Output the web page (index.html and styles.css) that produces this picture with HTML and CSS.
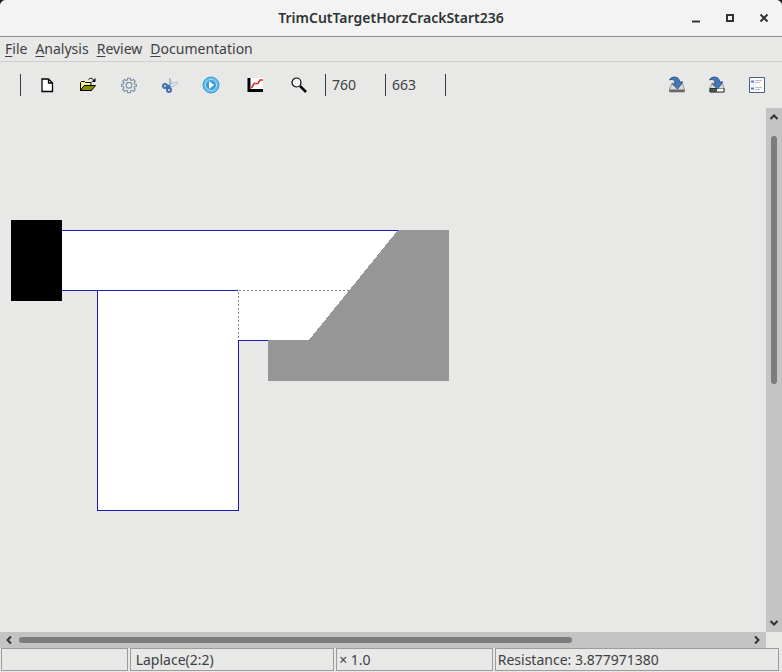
FILE: index.html
```html
<!DOCTYPE html>
<html lang="en">
<head>
<meta charset="utf-8">
<title>TrimCutTargetHorzCrackStart236</title>
<link rel="stylesheet" href="styles.css">
</head>
<body>
<div class="window">
  <header class="titlebar">
    <h1 class="title">TrimCutTargetHorzCrackStart236</h1>
    <div class="controls">
      <button type="button" aria-label="Minimize"><svg width="10" height="10" viewBox="0 0 10 10"><path d="M1 8.5h8" stroke="#2e3436" stroke-width="2"/></svg></button>
      <button type="button" aria-label="Maximize"><svg width="10" height="10" viewBox="0 0 10 10"><path d="M2 2h6v6H2z" fill="none" stroke="#2e3436" stroke-width="2"/></svg></button>
      <button type="button" aria-label="Close"><svg width="10" height="10" viewBox="0 0 10 10"><path d="M1.500 1.500l7 7M8.500 1.500l-7 7" stroke="#2e3436" stroke-width="2"/></svg></button>
    </div>
  </header>

  <nav class="menubar">
    <button type="button"><u>F</u>ile</button>
    <button type="button"><u>A</u>nalysis</button>
    <button type="button"><u>R</u>eview</button>
    <button type="button"><u>D</u>ocumentation</button>
  </nav>

  <div class="toolbar" role="toolbar">
    <span class="sep"></span>
    <div class="tools">
      <button type="button" aria-label="New"><svg width="18" height="18" viewBox="0 0 18 18"><path d="M4 3h6.500l4 4v8.500H4z" fill="#fff" stroke="#000" stroke-width="1.300"/><path d="M10.500 3v4h4" fill="none" stroke="#000" stroke-width="1.300"/></svg></button>
      <button type="button" aria-label="Open"><svg width="18" height="16" viewBox="0 0 18 16"><path d="M1.500 13.500v-8l1-1h3l1 1h5.500v3" fill="#f8f58a" stroke="#000"/><path d="M1.500 13.500l3.500-5h11.500l-4 5z" fill="#8c8c00" stroke="#000"/><path d="M9.500 2.500c1.500-2 4-1.500 5.500 1" fill="none" stroke="#000"/><path d="M16.500 1v4h-4z" fill="#000"/></svg></button>
      <button type="button" aria-label="Settings"><svg width="18" height="18" viewBox="0 0 20 20" fill="none" stroke="#7893a8" stroke-width="1.300"><path d="M8.500 2.500h3l.4 2.100 1.100.5 1.900-1.300 2 2-1.300 1.900.5 1.200 2.100.4v2.200l-2.100.5-.5 1.200 1.300 1.900-2 2-1.900-1.200-1.100.5-.4 2.100h-3l-.4-2.100-1.100-.5-1.900 1.200-2-2 1.300-1.900-.5-1.200-2.100-.5V9.300l2.100-.4.5-1.200-1.300-1.900 2-2L7 5.100l1.100-.5z"/><circle cx="10" cy="10.300" r="3.200"/></svg></button>
      <button type="button" aria-label="Cut"><svg width="18" height="18" viewBox="0 0 18 18"><path d="M8.500 2l1.500 3 .5 5-2 1.500z" fill="#bcc7d0" stroke="#8ba3b5" stroke-width=".6"/><path d="M17 6l-4 .5-7 3.500 5 .8c2-.2 5-2.800 6-4.800z" fill="#dce2e7" stroke="#9dacb8" stroke-width=".6"/><g fill="none" stroke="#3f6faa" stroke-width="2"><circle cx="4" cy="10" r="2"/><circle cx="8" cy="14" r="2"/><path d="M6 10.500l3-1M8.500 12v-2.500"/></g></svg></button>
      <button type="button" aria-label="Run"><svg width="18" height="18" viewBox="0 0 18 18"><circle cx="9" cy="9" r="8" fill="#62bdec" stroke="#3b9bd2"/><circle cx="9" cy="9" r="5.500" fill="#3f9bd8" stroke="#a4def8"/><path d="M7 5l5 4-5 4z" fill="#fff"/></svg></button>
      <button type="button" class="group" aria-label="Plot"><svg width="16" height="16" viewBox="0 0 16 16"><path d="M1 1h15v14H1z" fill="#fff"/><path d="M2 1v12.500h14" fill="none" stroke="#000" stroke-width="3"/><path d="M4.500 11l2.500-4.500h4l2-3.500h3" fill="none" stroke="#e52a35" stroke-width="1.600"/></svg></button>
      <button type="button" class="group" aria-label="Zoom"><svg width="16" height="16" viewBox="0 0 16 16"><circle cx="5.500" cy="5.500" r="4.500" fill="#f4f4f3" stroke="#000" stroke-width="1.200"/><path d="M9 9l6 6" stroke="#000" stroke-width="2.500"/></svg></button>
    </div>
    <span class="sep"></span>
    <output class="coord" aria-label="X">760</output>
    <span class="sep"></span>
    <output class="coord" aria-label="Y">663</output>
    <span class="sep"></span>
    <div class="saves">
      <button type="button" aria-label="Save"><svg width="18" height="18" viewBox="0 0 18 18"><path d="M4 7h10l2.500 6v3h-15v-3z" fill="#dadbd8" stroke="#8a8c88" stroke-width=".8"/><path d="M1.500 13.500h15V16h-15z" fill="#666b68"/><path d="M1.500 4C3 0 10 0 11.500 4.500l.3 1.500h3L9.500 13 4.500 8h2.700C7.500 4.500 4.500 2.500 1.500 4z" fill="#4679b7" stroke="#204a87" stroke-width=".9"/></svg></button>
      <button type="button" aria-label="Save as"><svg width="18" height="18" viewBox="0 0 18 18"><path d="M4 7h10l2.500 6v3h-15v-3z" fill="#dadbd8" stroke="#8a8c88" stroke-width=".8"/><path d="M2 12.500h14V16H2z" fill="#50564d" stroke="#2e3436"/><path d="M9 12.500h6.500v3H9z" fill="#f5f5f0"/><path d="M1.500 4C3 0 10 0 11.500 4.500l.3 1.500h3L9.500 13 4.500 8h2.700C7.500 4.500 4.500 2.500 1.500 4z" fill="#4679b7" stroke="#204a87" stroke-width=".9"/></svg></button>
      <button type="button" aria-label="Properties"><svg width="18" height="18" viewBox="0 0 18 18"><path d="M1.500 1.500h15v15h-15z" fill="#fcfcfc" stroke="#4b6080"/><path d="M3 5.500h3M3 12.500h3" stroke="#4a7ad0" stroke-width="2"/><path d="M7 4.500h7M7 6.500h5M7 11.500h7M7 13.500h5" stroke="#b9bec7"/></svg></button>
    </div>
  </div>

  <main class="view">
    <svg class="drawing" width="766" height="523" role="img" aria-label="Resistor geometry" shape-rendering="crispEdges">
      <path d="M62 122h336L309 232h-71v171H98V183H62z" fill="#fff"/>
      <path d="M398 122h51v151H268v-41h41z" fill="#969696"/>
      <g fill="none" stroke="#1c1cc4"><path d="M62 122.500h336M62 182.500h176M97.500 182v221M97 402.500h142M238.500 403V232M238 232.500h30"/></g>
      <path d="M239 182.500h110M238.500 184v48" fill="none" stroke="#858585" stroke-dasharray="2 2"/>
      <path d="M11 112h51v81H11z"/>
    </svg>
    <div class="vbar">
      <button type="button" aria-label="Scroll up"><svg width="10" height="8" viewBox="0 0 10 8"><path d="M1.500 6L5 2.500 8.500 6"/></svg></button>
      <div class="track"><div class="thumb"></div></div>
      <button type="button" aria-label="Scroll down"><svg width="10" height="8" viewBox="0 0 10 8"><path d="M1.500 2L5 5.500 8.500 2"/></svg></button>
    </div>
    <div class="hbar">
      <button type="button" aria-label="Scroll left"><svg width="8" height="10" viewBox="0 0 8 10"><path d="M6 1.500L2.500 5 6 8.500"/></svg></button>
      <div class="track"><div class="thumb"></div></div>
      <button type="button" aria-label="Scroll right"><svg width="8" height="10" viewBox="0 0 8 10"><path d="M2 1.500L5.500 5 2 8.500"/></svg></button>
    </div>
  </main>

  <footer class="status">
    <span class="cell"></span>
    <span class="cell wide">Laplace(2:2)</span>
    <span class="cell">× 1.0</span>
    <span class="cell">Resistance: 3.877971380</span>
  </footer>
</div>
</body>
</html>
```
FILE: styles.css
```css
* { box-sizing: border-box; }
body {
  margin: 0;
  background: #1c1c1c;
  color: #3d4143;
  font: 14px/20px "Noto Sans", "Open Sans", sans-serif;
}
button {
  margin: 0;
  padding: 0;
  border: 0;
  background: none;
  color: inherit;
  font: inherit;
}
svg { display: block; }
.window {
  display: flex;
  flex-direction: column;
  height: 100vh;
  overflow: hidden;
  border-radius: 6px 6px 0 0;
  background: #e8e8e7;
}
.titlebar {
  display: grid;
  grid-template-columns: 1fr auto 1fr;
  align-items: center;
  height: 37px;
  flex: none;
  padding: 0 13px;
  border-bottom: 1px solid #8f9190;
  background: #f3f3f3;
}
.title {
  grid-column: 2;
  margin: 0;
  color: #2e3436;
  font-size: 14px;
  font-weight: 600;
  line-height: 20px;
}
.controls { display: flex; justify-content: flex-end; gap: 24px; }
.menubar {
  display: flex;
  gap: 8px;
  flex: none;
  height: 25px;
  padding: 2px 5px;
  border-bottom: 1px solid #cfcfce;
}
.menubar u { text-underline-offset: 2px; }
.toolbar {
  display: flex;
  align-items: center;
  flex: none;
  height: 46px;
  padding: 0 16px 0 20px;
}
.sep { width: 1px; height: 22px; background: #3a3d3e; }
.tools { display: flex; align-items: center; gap: 23px; width: 304px; padding-left: 17px; }
.tools button { display: grid; place-items: center; flex: none; width: 18px; }
.tools .group { margin-left: 3px; }
.coord { width: 59px; padding-left: 6px; }
.saves { display: flex; gap: 22px; margin-left: auto; }
.view {
  display: grid;
  grid-template-columns: 1fr 16px;
  grid-template-rows: 1fr 16px;
  flex: 1;
  min-height: 0;
}
.drawing { width: 100%; height: 100%; }
.vbar, .hbar { display: flex; background: #c3c4c3; }
.vbar { flex-direction: column; }
.vbar button, .hbar button { display: grid; place-items: center; flex: none; width: 18px; height: 16px; }
.vbar button { width: 16px; height: 18px; }
.vbar path, .hbar path { fill: none; stroke: #2e3436; stroke-width: 2; }
.track { flex: 1; }
.vbar .track { padding: 10px 5px; }
.hbar .track { padding: 5px 1px; }
.thumb { border-radius: 3px; background: #7a7d7d; }
.vbar .thumb { width: 6px; height: 53%; }
.hbar .thumb { width: 76%; height: 6px; }
.status {
  display: grid;
  grid-template-columns: 127fr 205fr 157fr 285fr;
  gap: 2px;
  flex: none;
  height: 24px;
  padding: 0 3px 1px 1px;
}
.cell {
  overflow: hidden;
  padding: 0 2px;
  border: 1px solid #9b9c9b;
  white-space: nowrap;
  line-height: 22px;
}
.wide { padding-left: 5px; }
```
